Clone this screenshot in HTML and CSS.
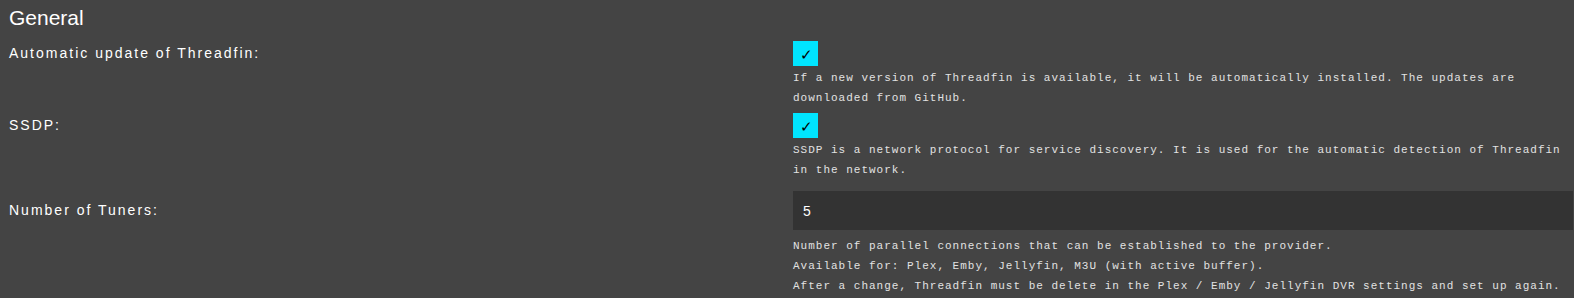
FILE: index.html
```html
<!DOCTYPE html>
<html lang="en">
<head>
<meta charset="utf-8">
<title>Settings - General</title>
<link rel="stylesheet" href="styles.css">
</head>
<body>
<div class="settings">
  <h2 class="section-title">General</h2>
  <div class="rows">
    <div class="row">
      <div class="label label-check">Automatic update of Threadfin:</div>
      <div class="control">
        <span class="checkbox">✓</span>
        <p class="desc">If a new version of Threadfin is available, it will be automatically installed. The updates are downloaded from GitHub.</p>
      </div>
    </div>
    <div class="row">
      <div class="label label-check">SSDP:</div>
      <div class="control">
        <span class="checkbox">✓</span>
        <p class="desc">SSDP is a network protocol for service discovery. It is used for the automatic detection of Threadfin in the network.</p>
      </div>
    </div>
    <div class="row">
      <div class="label label-input">Number of Tuners:</div>
      <div class="control">
        <input class="text-input" type="text" value="5">
        <p class="desc desc-input">Number of parallel connections that can be established to the provider.<br>Available for: Plex, Emby, Jellyfin, M3U (with active buffer).<br>After a change, Threadfin must be delete in the Plex / Emby / Jellyfin DVR settings and set up again.</p>
      </div>
    </div>
  </div>
</div>
</body>
</html>
```
FILE: styles.css
```css
html, body {
  margin: 0;
  padding: 0;
  background: #444444;
}

body {
  font-family: "Liberation Sans", Arial, sans-serif;
  color: #ffffff;
  overflow: hidden;
}

.settings {
  padding: 6px 1px 0 9px;
}

.section-title {
  margin: 0;
  font-size: 21px;
  line-height: 24px;
  font-weight: normal;
  color: #ffffff;
}

.rows {
  display: flex;
  flex-direction: column;
  gap: 5px;
  margin-top: 11px;
}

.row {
  display: grid;
  grid-template-columns: 784px 1fr;
}

.label {
  font-size: 14px;
  letter-spacing: 2px;
  color: #ffffff;
}

.label-check {
  line-height: 25px;
}

.label-input {
  padding-top: 6px;
  line-height: 39px;
}

.control {
  display: flex;
  flex-direction: column;
  align-items: flex-start;
}

.checkbox {
  display: flex;
  align-items: center;
  justify-content: center;
  width: 25px;
  height: 25px;
  background: #00e5ff;
  color: #000000;
  font-family: "DejaVu Sans", sans-serif;
  font-size: 15px;
  font-weight: 300;
  padding-top: 3px;
  padding-left: 2px;
  box-sizing: border-box;
}

.desc {
  margin: 2px 0 0 0;
  font-family: "Liberation Mono", "DejaVu Sans Mono", monospace;
  font-size: 11px;
  line-height: 20px;
  letter-spacing: 1px;
  color: #e2e2e2;
}

.desc-input {
  margin-top: 6px;
}

.text-input {
  margin-top: 6px;
  width: 100%;
  height: 39px;
  box-sizing: border-box;
  border: none;
  outline: none;
  background: #333333;
  color: #ffffff;
  font-family: "Liberation Sans", Arial, sans-serif;
  font-size: 14px;
  padding: 0 10px;
}
```
